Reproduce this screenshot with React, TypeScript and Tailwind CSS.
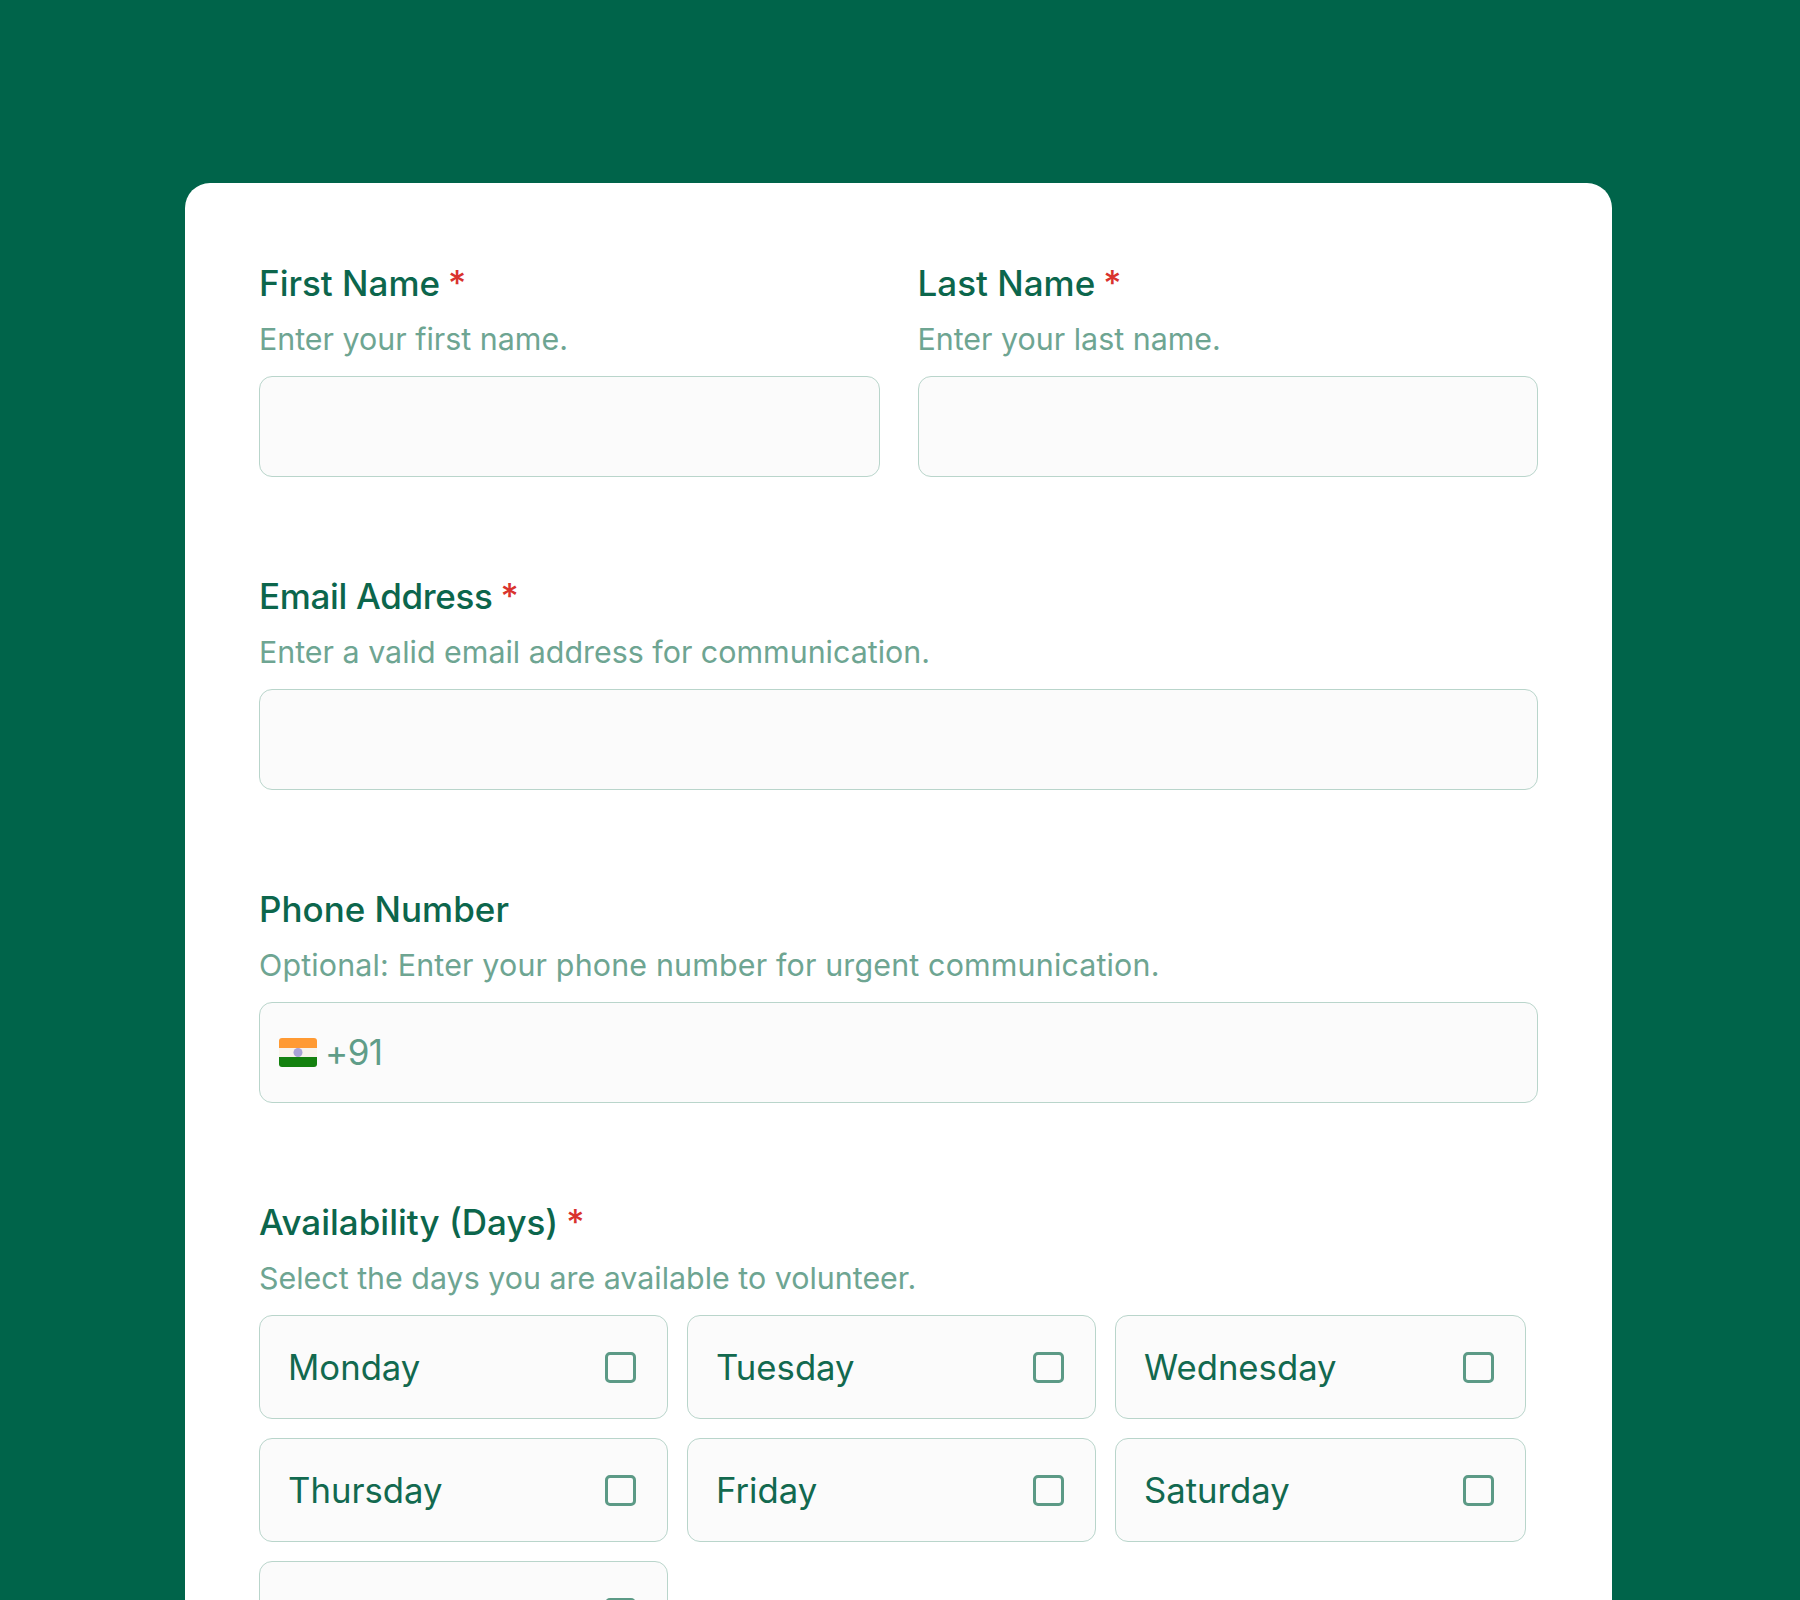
import { clsx } from "clsx";

const fieldFont = { fontFamily: '"Inter", "Liberation Sans", sans-serif' };

function Label({ text, required, className }: { text: string; required?: boolean; className?: string }) {
  return (
    <label className={clsx("block h-[44px] text-[35px] leading-[44px] font-[450] text-[#0c664c]", className)}>
      {text}
      {required && <span className="ml-[8px] text-[#d9332e]">*</span>}
    </label>
  );
}

function Hint({ text, className }: { text: string; className?: string }) {
  return <p className={clsx("mt-[14px] h-[40px] text-[30.4px] leading-[40px] text-[#6ea592]", className)}>{text}</p>;
}

function TextInput() {
  return (
    <input
      type="text"
      className="mt-[17px] block h-[101px] w-full rounded-[13px] border border-[#b9d5cb] bg-[#fbfbfb] px-5 outline-none"
    />
  );
}

function Field({ label, hint, required, labelClass }: { label: string; hint: string; required?: boolean; labelClass?: string }) {
  return (
    <div>
      <Label text={label} required={required} className={labelClass} />
      <Hint text={hint} />
      <TextInput />
    </div>
  );
}

function DayOption({ day }: { day: string }) {
  return (
    <label className="flex h-[104px] items-center justify-between rounded-[13px] border border-[#b9d5cb] bg-[#fbfbfb] pr-[31px] pl-[28px]">
      <span className="text-[34.7px] leading-none text-[#12694f]">{day}</span>
      <input
        type="checkbox"
        className="h-[31px] w-[31px] appearance-none rounded-[5px] border-[3px] border-[#5c9a86] bg-[#fbfbfb]"
      />
    </label>
  );
}

function IndiaFlag() {
  return (
    <svg width="38" height="29" viewBox="0 0 38 29" className="shrink-0">
      <clipPath id="flag-clip">
        <rect width="38" height="29" rx="3" />
      </clipPath>
      <g clipPath="url(#flag-clip)">
        <rect width="38" height="10" fill="#ff9a33" />
        <rect y="10" width="38" height="9" fill="#f8f3ec" />
        <rect y="19" width="38" height="10" fill="#14810f" />
      </g>
      <circle cx="19" cy="14.5" r="4.5" fill="#a9a3d6" />
    </svg>
  );
}

const days = ["Monday", "Tuesday", "Wednesday", "Thursday", "Friday", "Saturday", "Sunday"];

export default function App() {
  return (
    <div className="h-[1600px] w-[1800px] overflow-hidden bg-[#00644a] pt-[183px] pl-[185px]" style={fieldFont}>
      <main className="min-h-[1600px] w-[1427px] rounded-[25px] bg-white px-[74px] pt-[78px]">
        <div className="grid grid-cols-2 gap-x-[38px]">
          <Field label="First Name" hint="Enter your first name." required />
          <Field label="Last Name" hint="Enter your last name." required />
        </div>

        <div className="mt-[97px]">
          <Field
            label="Email Address"
            hint="Enter a valid email address for communication."
            required
            labelClass="tracking-[-0.35px]"
          />
        </div>

        <div className="mt-[97px]">
          <Label text="Phone Number" />
          <Hint text="Optional: Enter your phone number for urgent communication." className="tracking-[0.17px]" />
          <div className="mt-[17px] flex h-[101px] w-full items-center gap-[8px] rounded-[13px] border border-[#b9d5cb] bg-[#fbfbfb] pl-[19px]">
            <IndiaFlag />
            <span className="text-[35px] leading-none tracking-[-0.5px] text-[#5f9d88]">+91</span>
          </div>
        </div>

        <div className="mt-[97px]">
          <Label text="Availability (Days)" required />
          <Hint text="Select the days you are available to volunteer." />
          <div className="mt-[17px] grid grid-cols-[409px_409px_411px] gap-[19px]">
            {days.map((day) => (
              <DayOption key={day} day={day} />
            ))}
          </div>
        </div>
      </main>
    </div>
  );
}
